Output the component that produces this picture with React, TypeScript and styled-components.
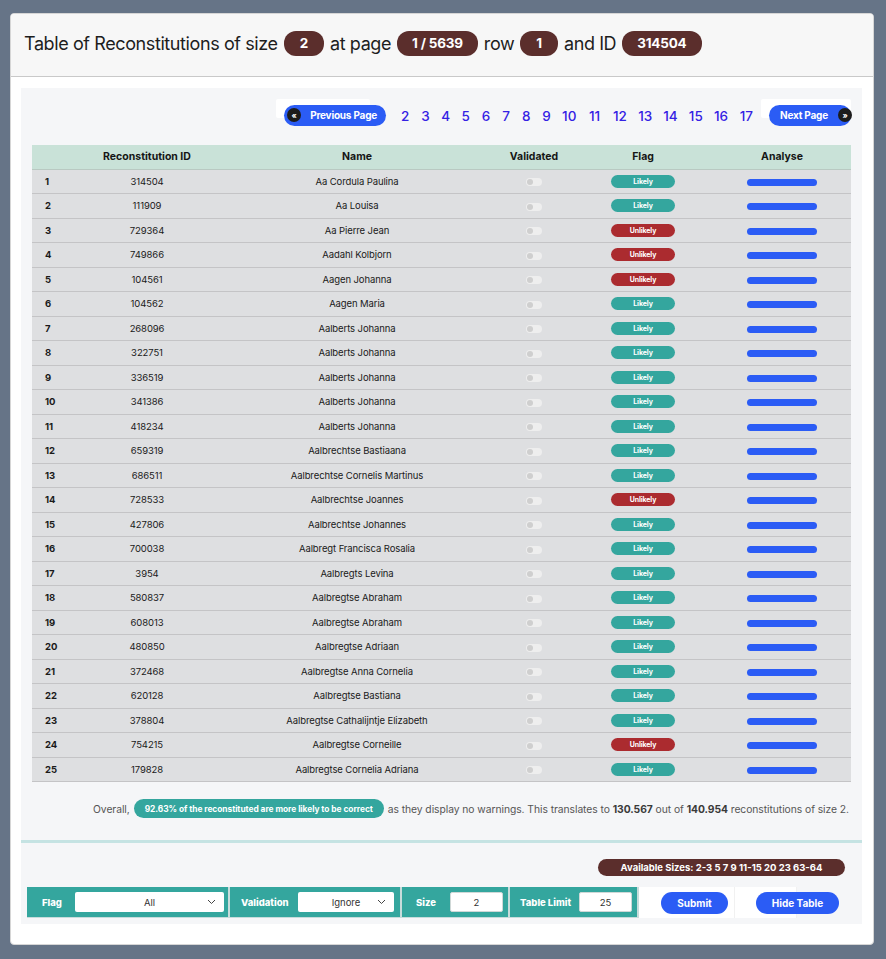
import React from "react";
import styled, { createGlobalStyle } from "styled-components";

const Global = createGlobalStyle`
  html, body { margin: 0; padding: 0; background: #667487; }
  body { font-family: Inter, "Noto Sans", Arial, sans-serif; color: #1f1f1f; }
  * { box-sizing: border-box; }
`;

const Page = styled.div`
  padding: 13px 12px 12px 10px;
`;

const Card = styled.div`
  background: #fff;
  border: 1px solid #d6d6d6;
  border-radius: 4px;
  overflow: hidden;
`;

const Header = styled.div`
  height: 63px;
  background: #f7f7f7;
  border-bottom: 1px solid #c9c9c9;
  display: flex;
  align-items: center;
  padding: 0 0 4px 13px;
  gap: 4px;
  font-size: 18px;
  letter-spacing: -0.4px;
  color: #1d1d1d;
`;

const DarkPill = styled.span<{ $px?: number }>`
  display: inline-flex;
  align-items: center;
  justify-content: center;
  background: #5b2e2c;
  color: #fff;
  font-weight: 700;
  font-size: 13.5px;
  letter-spacing: -0.2px;
  height: 25px;
  padding: 0 ${(p) => p.$px ?? 16}px;
  border-radius: 12px;
  margin: 0 2px;
`;

const CardBody = styled.div`
  padding: 11px 11px 20px 10px;
`;

const Panel = styled.div`
  background: #f5f6f8;
  padding: 16px 11px 0 11px;
`;

const Pager = styled.div`
  display: flex;
  justify-content: flex-end;
  align-items: center;
  height: 22px;
`;

const PagerBtnWrap = styled.div`
  position: relative;
  display: flex;
`;

const WhiteTab = styled.div<{ $left: number; $w: number }>`
  position: absolute;
  top: -6px;
  left: ${(p) => p.$left}px;
  width: ${(p) => p.$w}px;
  height: 19px;
  background: #fff;
  border-radius: 2px;
`;

const PagerBtn = styled.button<{ $w: number; $pl: number; $gap: number }>`
  position: relative;
  display: flex;
  align-items: center;
  width: ${(p) => p.$w}px;
  gap: ${(p) => p.$gap}px;
  height: 21px;
  border: none;
  border-radius: 11px;
  background: #2b5cf5;
  color: #fff;
  font-family: inherit;
  font-weight: 700;
  font-size: 10px;
  letter-spacing: -0.2px;
  white-space: nowrap;
  padding: 0 3px 0 ${(p) => p.$pl}px;
  cursor: pointer;
`;

const ArrowDot = styled.span`
  width: 14px;
  height: 14px;
  border-radius: 50%;
  background: #1c1c1c;
  color: #fff;
  font-size: 8px;
  display: flex;
  align-items: center;
  justify-content: center;
  line-height: 1;
  flex-shrink: 0;
`;

const PageNums = styled.div`
  display: flex;
  align-items: center;
  margin: 2px 10px 0 9px;
`;

const PageNum = styled.a<{ $w: number }>`
  width: ${(p) => p.$w}px;
  text-align: center;
  color: #3421e4;
  font-size: 13.5px;
  font-weight: 500;
  text-decoration: none;
`;

const Table = styled.table`
  width: 819px;
  border-collapse: collapse;
  margin-top: 19px;
  table-layout: fixed;
  font-size: 9.5px;
`;

const Th = styled.th`
  background: #c9e2d8;
  height: 24px;
  font-size: 10.5px;
  font-weight: 700;
  text-align: center;
  border-bottom: 1px solid #b9c9c2;
  color: #161616;
`;

const Tr = styled.tr`
  background: #dedfe1;
`;

const Td = styled.td<{ $bold?: boolean; $left?: boolean }>`
  height: 24.5px;
  padding: 0;
  text-align: ${(p) => (p.$left ? "left" : "center")};
  padding-left: ${(p) => (p.$left ? "13px" : "0")};
  font-weight: ${(p) => (p.$bold ? 700 : 400)};
  border-bottom: 1px solid #c4c4c6;
  color: #1a1a1a;
  letter-spacing: -0.1px;
  vertical-align: middle;
`;

const Toggle = styled.span`
  display: inline-flex;
  align-items: center;
  width: 16px;
  height: 8px;
  border-radius: 4px;
  background: #eeeeee;
  padding-left: 1px;
  vertical-align: middle;
  &::before {
    content: "";
    width: 6px;
    height: 6px;
    border-radius: 50%;
    background: #cfcfcf;
  }
`;

const FlagPill = styled.span<{ $bad?: boolean }>`
  display: inline-flex;
  align-items: center;
  justify-content: center;
  width: 64px;
  height: 13px;
  border-radius: 7px;
  background: ${(p) => (p.$bad ? "#ab2b2f" : "#34a69e")};
  color: #fff;
  font-size: 7px;
  font-weight: 700;
  vertical-align: middle;
`;

const Bar = styled.span`
  display: inline-block;
  width: 70px;
  height: 7px;
  border-radius: 4px;
  background: #2b5cf5;
  vertical-align: middle;
`;

const Summary = styled.div`
  display: flex;
  justify-content: flex-end;
  align-items: center;
  gap: 4px;
  font-size: 10.3px;
  letter-spacing: -0.05px;
  color: #555;
  padding: 17px 2px 0 0;
  height: 36px;
  b { color: #3a3a3a; }
`;

const TealPill = styled.span`
  display: inline-flex;
  align-items: center;
  justify-content: center;
  background: #34a69e;
  color: #fff;
  font-weight: 700;
  font-size: 8.4px;
  height: 19px;
  width: 250px;
  border-radius: 10px;
`;

const Separator = styled.div`
  height: 3px;
  background: #c5e3e3;
  margin: 22px -11px 0 -11px;
`;

const SizesRow = styled.div`
  display: flex;
  justify-content: flex-end;
  padding: 16px 6px 0 0;
`;

const SizesPill = styled.span`
  display: inline-flex;
  align-items: center;
  justify-content: center;
  background: #5b2e2c;
  color: #fff;
  font-weight: 700;
  font-size: 9.5px;
  height: 17px;
  width: 247px;
  border-radius: 9px;
`;

const FilterBar = styled.div`
  display: flex;
  margin: 11px 0 0 -5px;
  padding-bottom: 6px;
`;

const FilterCell = styled.div<{ $w: number; $pl: number }>`
  width: ${(p) => p.$w}px;
  height: 31px;
  background: #34a69e;
  display: flex;
  align-items: center;
  padding-left: ${(p) => p.$pl}px;
  border-right: 2px solid #c7dcdb;
  border-bottom: 1px solid #c7dcdb;
`;

const FilterLabel = styled.span<{ $w: number }>`
  width: ${(p) => p.$w}px;
  color: #fff;
  font-weight: 800;
  font-size: 9.5px;
  flex-shrink: 0;
`;

const SelectBox = styled.div<{ $w: number }>`
  width: ${(p) => p.$w}px;
  height: 20px;
  background: #fff;
  border-radius: 2px;
  display: flex;
  align-items: center;
  justify-content: center;
  position: relative;
  font-size: 9.5px;
  color: #333;
  svg { position: absolute; right: 8px; top: 7px; }
`;

const InputBox = styled.div<{ $w: number }>`
  width: ${(p) => p.$w}px;
  height: 20px;
  background: #fff;
  border-radius: 2px;
  border: 1px solid #cfd8d7;
  display: flex;
  align-items: center;
  justify-content: center;
  font-size: 9.5px;
  color: #333;
`;

const ButtonCell = styled.div<{ $w: number; $pl: number }>`
  width: ${(p) => p.$w}px;
  height: 31px;
  background: #fff;
  display: flex;
  align-items: center;
  padding-left: ${(p) => p.$pl}px;
  border-right: 1px solid #f1f1f1;
`;

const BlueBtn = styled.button<{ $w: number }>`
  width: ${(p) => p.$w}px;
  flex-shrink: 0;
  height: 22px;
  border: none;
  border-radius: 11px;
  background: #2b5cf5;
  color: #fff;
  font-family: inherit;
  font-weight: 700;
  font-size: 10px;
  white-space: nowrap;
  cursor: pointer;
`;

const rows: [number, string, string, boolean][] = [
  [1, "314504", "Aa Cordula Paulina", false],
  [2, "111909", "Aa Louisa", false],
  [3, "729364", "Aa Pierre Jean", true],
  [4, "749866", "Aadahl Kolbjorn", true],
  [5, "104561", "Aagen Johanna", true],
  [6, "104562", "Aagen Maria", false],
  [7, "268096", "Aalberts Johanna", false],
  [8, "322751", "Aalberts Johanna", false],
  [9, "336519", "Aalberts Johanna", false],
  [10, "341386", "Aalberts Johanna", false],
  [11, "418234", "Aalberts Johanna", false],
  [12, "659319", "Aalbrechtse Bastiaana", false],
  [13, "686511", "Aalbrechtse Cornelis Martinus", false],
  [14, "728533", "Aalbrechtse Joannes", true],
  [15, "427806", "Aalbrechtse Johannes", false],
  [16, "700038", "Aalbregt Francisca Rosalia", false],
  [17, "3954", "Aalbregts Levina", false],
  [18, "580837", "Aalbregtse Abraham", false],
  [19, "608013", "Aalbregtse Abraham", false],
  [20, "480850", "Aalbregtse Adriaan", false],
  [21, "372468", "Aalbregtse Anna Cornelia", false],
  [22, "620128", "Aalbregtse Bastiana", false],
  [23, "378804", "Aalbregtse Cathalijntje Elizabeth", false],
  [24, "754215", "Aalbregtse Corneille", true],
  [25, "179828", "Aalbregtse Cornelia Adriana", false],
];

const pages = [2, 3, 4, 5, 6, 7, 8, 9, 10, 11, 12, 13, 14, 15, 16, 17];

const Chevron = () => (
  <svg width="9" height="6" viewBox="0 0 9 6" fill="none">
    <path d="M1 1l3.5 3.5L8 1" stroke="#444" strokeWidth="1" />
  </svg>
);

export default function App() {
  return (
    <Page>
      <Global />
      <Card>
        <Header>
          Table of Reconstitutions of size <DarkPill>2</DarkPill> at page{" "}
          <DarkPill $px={15}>1 / 5639</DarkPill> row <DarkPill>1</DarkPill> and ID{" "}
          <DarkPill $px={15}>314504</DarkPill>
        </Header>
        <CardBody>
          <Panel>
            <Pager>
              <PagerBtnWrap>
                <WhiteTab $left={-8} $w={94} />
                <PagerBtn $w={102} $pl={3} $gap={9}>
                  <ArrowDot>«</ArrowDot>
                  Previous Page
                </PagerBtn>
              </PagerBtnWrap>
              <PageNums>
                {pages.map((n) => (
                  <PageNum key={n} $w={n < 10 ? 20.2 : 25.3} href="#">
                    {n}
                  </PageNum>
                ))}
              </PageNums>
              <PagerBtnWrap>
                <WhiteTab $left={-8} $w={90} />
                <PagerBtn $w={82} $pl={11} $gap={10}>
                  Next Page
                  <ArrowDot>»</ArrowDot>
                </PagerBtn>
              </PagerBtnWrap>
            </Pager>
            <Table>
              <colgroup>
                <col style={{ width: 43 }} />
                <col style={{ width: 144 }} />
                <col style={{ width: 276 }} />
                <col style={{ width: 78 }} />
                <col style={{ width: 140 }} />
                <col style={{ width: 138 }} />
              </colgroup>
              <thead>
                <tr>
                  <Th></Th>
                  <Th>Reconstitution ID</Th>
                  <Th>Name</Th>
                  <Th>Validated</Th>
                  <Th>Flag</Th>
                  <Th>Analyse</Th>
                </tr>
              </thead>
              <tbody>
                {rows.map(([n, id, name, bad]) => (
                  <Tr key={n}>
                    <Td $bold $left>
                      {n}
                    </Td>
                    <Td>{id}</Td>
                    <Td>{name}</Td>
                    <Td>
                      <Toggle />
                    </Td>
                    <Td>
                      <FlagPill $bad={bad}>{bad ? "Unlikely" : "Likely"}</FlagPill>
                    </Td>
                    <Td>
                      <Bar />
                    </Td>
                  </Tr>
                ))}
              </tbody>
            </Table>
            <Summary>
              Overall,
              <TealPill>92.63% of the reconstituted are more likely to be correct</TealPill>
              <span>
                as they display no warnings. This translates to <b>130.567</b> out of{" "}
                <b>140.954</b> reconstitutions of size 2.
              </span>
            </Summary>
            <Separator />
            <SizesRow>
              <SizesPill>Available Sizes: 2-3 5 7 9 11-15 20 23 63-64</SizesPill>
            </SizesRow>
            <FilterBar>
              <FilterCell $w={203} $pl={15}>
                <FilterLabel $w={33}>Flag</FilterLabel>
                <SelectBox $w={149}>
                  All
                  <Chevron />
                </SelectBox>
              </FilterCell>
              <FilterCell $w={172} $pl={11}>
                <FilterLabel $w={57}>Validation</FilterLabel>
                <SelectBox $w={96}>
                  Ignore
                  <Chevron />
                </SelectBox>
              </FilterCell>
              <FilterCell $w={108} $pl={14}>
                <FilterLabel $w={34}>Size</FilterLabel>
                <InputBox $w={53}>2</InputBox>
              </FilterCell>
              <FilterCell $w={129} $pl={10}>
                <FilterLabel $w={59}>Table Limit</FilterLabel>
                <InputBox $w={53}>25</InputBox>
              </FilterCell>
              <ButtonCell $w={96} $pl={22}>
                <BlueBtn $w={67}>Submit</BlueBtn>
              </ButtonCell>
              <ButtonCell $w={62} $pl={21}>
                <BlueBtn $w={83}>Hide Table</BlueBtn>
              </ButtonCell>
            </FilterBar>
          </Panel>
        </CardBody>
      </Card>
    </Page>
  );
}
